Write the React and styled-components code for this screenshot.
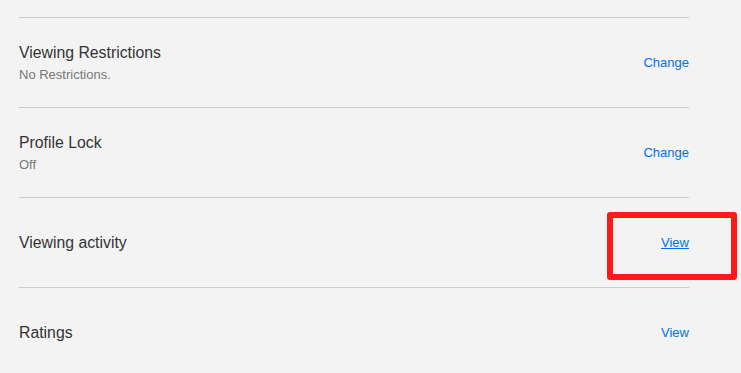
import styled, { createGlobalStyle } from "styled-components";

const GlobalStyle = createGlobalStyle`
  html, body {
    margin: 0;
    padding: 0;
    background: #f3f3f3;
    font-family: "Liberation Sans", Arial, sans-serif;
  }
`;

const Page = styled.div`
  width: 741px;
  height: 373px;
  overflow: hidden;
  background: #f3f3f3;
  padding: 17px 0 0 19px;
  box-sizing: border-box;
`;

const List = styled.div`
  width: 670px;
  display: flex;
  flex-direction: column;
`;

const Row = styled.div`
  position: relative;
  display: flex;
  align-items: center;
  justify-content: space-between;
  height: 90px;
  box-sizing: border-box;
  border-top: 1px solid #cccccc;
`;

const Info = styled.div`
  display: flex;
  flex-direction: column;
  gap: 5px;
`;

const Title = styled.span`
  font-size: 15.8px;
  color: #333333;
`;

const Sub = styled.span`
  font-size: 13px;
  color: #777777;
`;

const Action = styled.a`
  font-size: 13px;
  color: #0071eb;
  margin-top: -1px;
  text-decoration: ${(p) => (p.$underline ? "underline" : "none")};
  cursor: pointer;
`;

const Highlight = styled.div`
  position: absolute;
  top: 14px;
  right: -48px;
  width: 130px;
  height: 68px;
  box-sizing: border-box;
  border: 6px solid #ff1a1a;
  border-radius: 3px;
  pointer-events: none;
`;

const rows = [
  { title: "Viewing Restrictions", sub: "No Restrictions.", action: "Change" },
  { title: "Profile Lock", sub: "Off", action: "Change" },
  { title: "Viewing activity", action: "View", highlight: true },
  { title: "Ratings", action: "View" },
];

export default function App() {
  return (
    <Page>
      <GlobalStyle />
      <List>
        {rows.map((row) => (
          <Row key={row.title}>
            <Info>
              <Title>{row.title}</Title>
              {row.sub && <Sub>{row.sub}</Sub>}
            </Info>
            <Action $underline={row.highlight}>{row.action}</Action>
            {row.highlight && <Highlight />}
          </Row>
        ))}
      </List>
    </Page>
  );
}
